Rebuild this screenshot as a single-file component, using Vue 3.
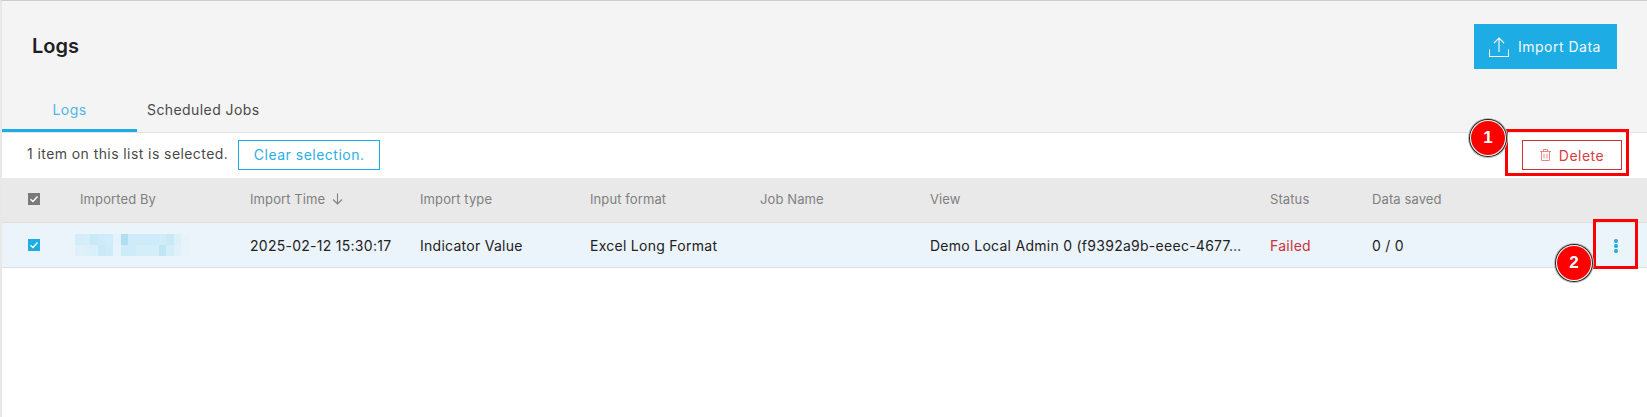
<script setup>
const columns = [
  { label: 'Imported By', width: 170 },
  { label: 'Import Time', width: 170, sort: true },
  { label: 'Import type', width: 170 },
  { label: 'Input format', width: 170 },
  { label: 'Job Name', width: 170 },
  { label: 'View', width: 340 },
  { label: 'Status', width: 102 },
  { label: 'Data saved', width: 150 }
]
const row = [
  '',
  '2025-02-12 15:30:17',
  'Indicator Value',
  'Excel Long Format',
  '',
  'Demo Local Admin 0 (f9392a9b-eeec-4677…',
  'Failed',
  '0 / 0'
]
const mosaic = [
  '#d3edf9','#d6eef9','#c8e9f7','#cdebf8','#d0ecf8','#e3f2fb','#aedff3','#cdebf8','#cdebf8','#cdebf8','#cdebf8','#cfecf8','#c8e9f7','#dcf0fa','#e6f3fb',
  '#dff0fa','#dcf0fa','#d9effa','#c8e9f7','#cdebf8','#e6f3fb','#cdebf8','#cdebf8','#d4eef9','#d4eef9','#d4eef9','#bfe5f6','#d3edf9','#e0f1fa','#e6f3fb'
]
</script>

<template>
  <div class="page">
    <span class="edge-mark"></span>
    <header class="head">
      <h1 class="title">Logs</h1>
      <button class="import">
        <svg class="import-icon" viewBox="0 0 20 20" width="20" height="20" fill="none" stroke="#fff" stroke-width="1.1">
          <path d="M0.5 12.5V19.5H19.5V12.5" />
          <path d="M10 15V1M5 6L10 1L15 6" />
        </svg>
        <span>Import Data</span>
      </button>
    </header>
    <nav class="tabs">
      <a class="tab active">Logs</a>
      <a class="tab">Scheduled Jobs</a>
    </nav>
    <div class="toolbar">
      <span class="selected">1 item on this list is selected.</span>
      <button class="clear">Clear selection.</button>
      <button class="delete">
        <svg viewBox="0 0 11 12" width="11" height="12" fill="none" stroke="#ec8388" stroke-width="1">
          <path d="M0 2.5H11M3.5 2.5V0.5H7.5V2.5M1.5 2.5V11.5H9.5V2.5M4 5V9.5M7 5V9.5" />
        </svg>
        <span>Delete</span>
      </button>
      <span class="callout callout-delete"></span>
      <span class="badge badge-one">1</span>
    </div>
    <div class="table">
      <div class="tr th">
        <span class="check-cell"><span class="check grey">
          <svg viewBox="0 0 12 12" width="12" height="12" fill="none" stroke="#fff" stroke-width="1.4"><path d="M2.5 6.2L5 8.5L9.5 3.5" /></svg>
        </span></span>
        <span v-for="c in columns" :key="c.label" class="cell" :style="{ width: c.width + 'px' }">
          {{ c.label }}
          <svg v-if="c.sort" class="sort" viewBox="0 0 11 12" width="11" height="12" fill="none" stroke="#808080" stroke-width="1.1"><path d="M5.5 0.5V11M1 6.5L5.5 11L10 6.5" /></svg>
        </span>
      </div>
      <div class="tr td">
        <span class="check-cell"><span class="check blue">
          <svg viewBox="0 0 12 12" width="12" height="12" fill="none" stroke="#fff" stroke-width="1.4"><path d="M2.5 6.2L5 8.5L9.5 3.5" /></svg>
        </span></span>
        <span v-for="(v, i) in row" :key="i" class="cell" :class="{ failed: v === 'Failed' }" :style="{ width: columns[i].width + 'px' }">
          <span v-if="i === 0" class="mosaic">
            <i v-for="(m, k) in mosaic" :key="k" :style="{ background: m }"></i>
          </span>
          <span v-else>{{ v }}</span>
        </span>
        <span class="kebab"><i></i><i></i><i></i></span>
        <span class="callout callout-menu"></span>
        <span class="badge badge-two">2</span>
      </div>
    </div>
  </div>
</template>

<style scoped>
.page {
  position: relative;
  width: 1647px;
  height: 417px;
  overflow: hidden;
  background: #fff;
  border-top: 1px solid #ccc;
  border-left: 2px solid #e8e8e8;
  box-sizing: border-box;
  font-family: Inter, "Liberation Sans", sans-serif;
  font-size: 14px;
}
.edge-mark {
  position: absolute;
  left: -2px;
  top: 0;
  width: 1px;
  height: 56px;
  background: #f00;
}
.head {
  display: flex;
  justify-content: space-between;
  align-items: center;
  height: 91px;
  padding: 0 30px;
  background: #f4f4f4;
}
.title {
  margin: 0 0 1px;
  font-size: 20px;
  font-weight: 600;
  color: #1f1f1f;
}
.import {
  display: flex;
  align-items: center;
  gap: 9px;
  width: 143px;
  height: 45px;
  padding: 0 15px;
  border: 0;
  background: #1dace3;
  color: #f3fafd;
  font: inherit;
  letter-spacing: 0.5px;
}
.tabs {
  display: flex;
  height: 41px;
  background: #f4f4f4;
  border-bottom: 1px solid #e4e4e4;
  box-sizing: border-box;
}
.tab {
  display: flex;
  justify-content: center;
  padding-top: 9px;
  width: 135px;
  box-sizing: border-box;
  color: #4a4a4a;
  letter-spacing: 0.42px;
}
.tab + .tab {
  width: auto;
  padding-left: 10px;
}
.tab.active {
  color: #4db8e8;
  border-bottom: 3px solid #1dace3;
}
.toolbar {
  position: relative;
  display: flex;
  align-items: center;
  height: 45px;
  padding: 0 0 2px 25px;
  box-sizing: border-box;
  color: #4a4a4a;
}
.selected {
  margin-top: -3px;
  letter-spacing: 0.42px;
}
.clear {
  margin-left: 10px;
  width: 142px;
  height: 30px;
  border: 1px solid #1dace3;
  background: #fff;
  color: #2bb0e6;
  font: inherit;
  letter-spacing: 0.5px;
}
.delete {
  position: absolute;
  left: 1520px;
  top: 7px;
  display: flex;
  align-items: center;
  justify-content: center;
  gap: 8px;
  width: 100px;
  height: 30px;
  border: 1px solid #c8323a;
  background: #fff;
  color: #d63c44;
  font: inherit;
  letter-spacing: 0.5px;
}
.callout {
  position: absolute;
  border: 3px solid #f00;
  box-sizing: border-box;
  z-index: 2;
}
.callout-delete {
  left: 1503px;
  top: -4px;
  width: 124px;
  height: 47px;
}
.badge {
  position: absolute;
  z-index: 3;
  display: flex;
  align-items: center;
  justify-content: center;
  width: 34px;
  height: 34px;
  border-radius: 50%;
  background: #f00;
  box-shadow: 0 0 0 1px #fff, 0 0 0 2px #222, 0 0 0 3px #bbb;
  color: #fff;
  font: 700 17px "Liberation Sans", sans-serif;
}
.badge-one {
  left: 1469px;
  top: -12px;
}
.tr {
  position: relative;
  display: flex;
  align-items: center;
  box-sizing: border-box;
}
.th {
  height: 45px;
  background: #e9e9e9;
  border-bottom: 1px solid #dedede;
  color: #808080;
  font-size: 13px;
  letter-spacing: 0.1px;
}
.th .cell,
.th .check-cell {
  padding-bottom: 3px;
}
.th .cell {
  gap: 7px;
}
.td {
  height: 45px;
  background: #ebf3fb;
  border-bottom: 1px solid #dedede;
  color: #222;
  letter-spacing: 0.27px;
}
.check-cell {
  display: flex;
  width: 78px;
  padding-left: 26px;
  box-sizing: border-box;
}
.check {
  display: flex;
  width: 12px;
  height: 12px;
}
.check.grey { background: #7a7a7a; }
.check.blue { background: #1dace3; }
.cell {
  display: flex;
  align-items: center;
  gap: 9px;
  flex: none;
  box-sizing: border-box;
  padding-right: 10px;
  white-space: nowrap;
}
.failed { color: #c8323a; }
.mosaic {
  display: grid;
  grid-template-columns: repeat(15, 7.6px);
  grid-auto-rows: 11px;
  margin-left: -5px;
}
.kebab {
  position: absolute;
  left: 1612px;
  top: 16px;
  display: flex;
  flex-direction: column;
  gap: 1px;
}
.kebab i {
  width: 4px;
  height: 4px;
  border-radius: 50%;
  background: #1dace3;
}
.callout-menu {
  left: 1591px;
  top: -4px;
  width: 45px;
  height: 50px;
}
.badge-two {
  left: 1555px;
  top: 23px;
}
</style>
